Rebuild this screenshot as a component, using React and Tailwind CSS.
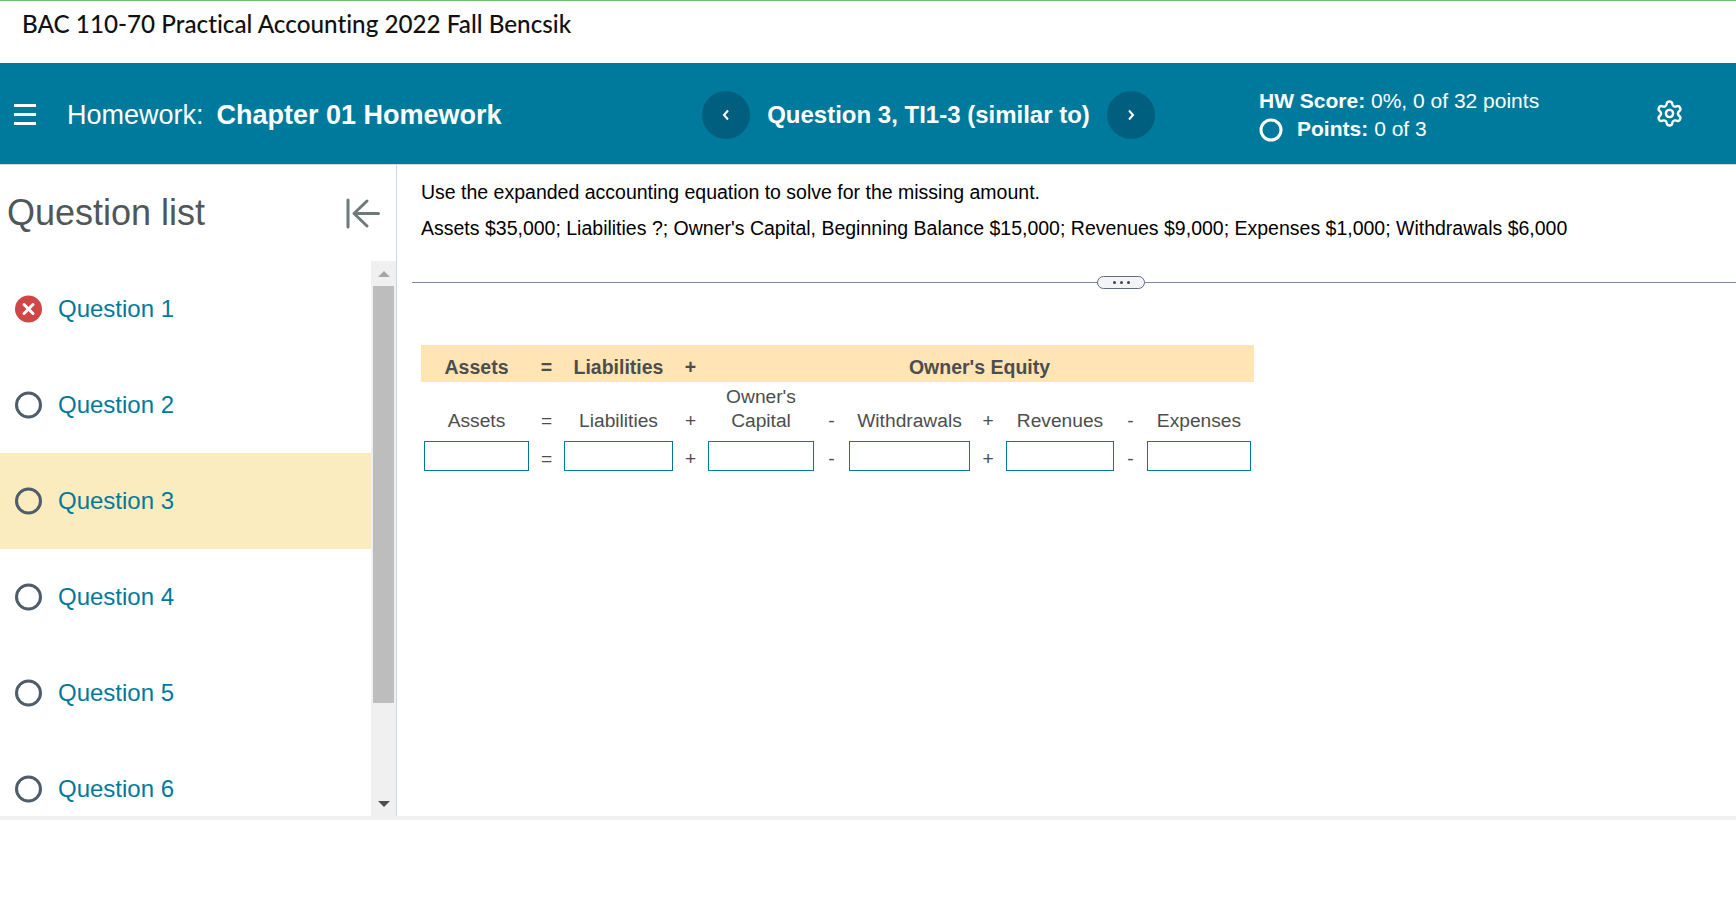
import React from 'react';
import { Settings } from 'lucide-react';

const questions = ['Question 1', 'Question 2', 'Question 3', 'Question 4', 'Question 5', 'Question 6'];

const RingIcon = () => (
  <svg width="29" height="29" viewBox="0 0 29 29" className="shrink-0">
    <circle cx="14.5" cy="14" r="12" fill="none" stroke="#4f5d6b" strokeWidth="3" />
  </svg>
);

const WrongIcon = () => (
  <svg width="29" height="29" viewBox="0 0 29 29" className="shrink-0">
    <circle cx="14.5" cy="14" r="13.5" fill="#d04545" />
    <path d="M10 9.5l9 9M19 9.5l-9 9" stroke="#fff" strokeWidth="3" strokeLinecap="round" />
  </svg>
);

const NavButton = ({ dir }) => (
  <div className="w-[48px] h-[48px] rounded-full bg-[#005f7f] flex items-center justify-center shrink-0">
    <svg width="10" height="14" viewBox="0 0 10 14" fill="none" stroke="#fff" strokeWidth="2">
      <path d={dir === 'left' ? 'M7 2.5L3 7l4 4.5' : 'M3 2.5L7 7l-4 4.5'} />
    </svg>
  </div>
);

// column widths of the equation table, operators sit between the value columns
const gridCols = 'grid grid-cols-[111px_29px_115px_29px_112px_29px_127px_30px_114px_27px_110px]';

const headLabels = ['Assets', '=', 'Liabilities', '+', "Owner's|Capital", '-', 'Withdrawals', '+', 'Revenues', '-', 'Expenses'];

const EquationTable = () => (
  <div className="w-[833px] mt-[62px] ml-[9px] text-[19.2px] leading-[24px] text-[#4d4d4d]">
    <div className={`${gridCols} h-[37px] bg-[#ffe4b5] text-[19.5px] font-bold items-center text-center pt-[6px]`}>
      <div>Assets</div>
      <div>=</div>
      <div>Liabilities</div>
      <div>+</div>
      <div className="col-span-7">Owner's Equity</div>
    </div>
    <div className={`${gridCols} h-[59px] items-end text-center pb-[8px]`}>
      {headLabels.map((label, i) => (
        <div key={i}>
          {label.split('|').map((line) => (
            <div key={line}>{line}</div>
          ))}
        </div>
      ))}
    </div>
    <div className={`${gridCols} h-[30px] items-center text-center`}>
      {headLabels.map((label, i) =>
        i % 2 === 0 ? (
          <div key={i} className="px-[3px]">
            <div className="h-[30px] bg-white border border-[#007a9c]" />
          </div>
        ) : (
          <div key={i} className="pt-[5px]">{label}</div>
        )
      )}
    </div>
  </div>
);

export default function App() {
  return (
    <div className="w-[1736px] h-[912px] overflow-hidden bg-white flex flex-col font-['Liberation_Sans',sans-serif]">
      <div className="h-[63px] border-t border-[#6cc070] pl-[22px] pt-[7px] shrink-0">
        <div className="text-[24.25px] leading-[32px] text-[#111] font-['Lato',sans-serif] font-medium [font-variant-ligatures:none]">BAC 110-70 Practical Accounting 2022 Fall Bencsik</div>
      </div>

      <div className="h-[102px] bg-[#007a9c] border-b border-[#d5dbe0] flex items-center pt-[3px] text-white shrink-0">
        <div className="w-[22px] ml-[14px] mt-[-2px] flex flex-col gap-[6px]">
          <div className="h-[3px] bg-white" />
          <div className="h-[3px] bg-white" />
          <div className="h-[3px] bg-white" />
        </div>
        <div className="ml-[31px] w-[635px] text-[27px]">
          Homework:<span className="ml-[13px] font-bold">Chapter 01 Homework</span>
        </div>
        <NavButton dir="left" />
        <div className="w-[357px] text-center text-[24px] font-bold">Question 3, TI1-3 (similar to)</div>
        <NavButton dir="right" />
        <div className="ml-[104px] w-[396px] text-[21px] leading-[28px]">
          <div><span className="font-bold">HW Score:</span> 0%, 0 of 32 points</div>
          <div className="flex items-center">
            <svg width="24" height="24" viewBox="0 0 24 24" className="mt-[2px] shrink-0">
              <circle cx="12" cy="12" r="10" fill="none" stroke="#fff" strokeWidth="3" />
            </svg>
            <span className="ml-[14px] font-bold">Points:</span>
            <span className="ml-[6px]">0 of 3</span>
          </div>
        </div>
        <Settings size={29} strokeWidth={2} className="mt-[-4px]" />
      </div>

      <div className="h-[651px] flex shrink-0">
        <div className="w-[397px] shrink-0 border-r border-[#ccd3e3] flex flex-col overflow-hidden">
          <div className="h-[96px] shrink-0 flex items-center justify-between pl-[7px] pr-[16px]">
            <div className="text-[36px] text-[#505759]">Question list</div>
            <svg width="34" height="31" viewBox="0 0 34 31" fill="none" stroke="#6f7b7b" strokeWidth="3" strokeLinecap="round" strokeLinejoin="round">
              <path d="M2 2v27M32.5 15.5H8M21 3L8 15.5 21 28" />
            </svg>
          </div>
          <div className="flex flex-1 min-h-0">
            <div className="flex-1 min-w-0">
              {questions.map((q, i) => (
                <div key={q} className={`h-[96px] flex items-center pl-[14px] gap-[15px] text-[24px] text-[#007a9c] ${i === 2 ? 'bg-[#faecbe]' : ''}`}>
                  {i === 0 ? <WrongIcon /> : <RingIcon />}
                  <span>{q}</span>
                </div>
              ))}
            </div>
            <div className="w-[25px] shrink-0 bg-[#f0f0f0] flex flex-col items-center">
              <div className="h-[25px] flex items-center justify-center">
                <div className="w-0 h-0 border-x-[6px] border-x-transparent border-b-[6px] border-b-[#a6a6a6]" />
              </div>
              <div className="w-[21px] h-[417px] bg-[#bdbdbd]" />
              <div className="flex-1 flex items-end pb-[9px]">
                <div className="w-0 h-0 border-x-[6px] border-x-transparent border-t-[6px] border-t-[#4d4d4d]" />
              </div>
            </div>
          </div>
        </div>

        <div className="flex-1 min-w-0 pl-[15px] overflow-hidden">
          <div className="pl-[9px] pt-[15px] text-[19.5px] leading-[24px] text-black">
            <div>Use the expanded accounting equation to solve for the missing amount.</div>
            <div className="mt-[12px]">Assets $35,000; Liabilities ?; Owner's Capital, Beginning Balance $15,000; Revenues $9,000; Expenses $1,000; Withdrawals $6,000</div>
          </div>
          <div className="relative mt-[42px] h-px bg-[#7d899b]">
            <div className="absolute left-[685px] top-[-6px] w-[48px] h-[13px] rounded-full bg-[#f2f4f7] border border-[#5f6f80] flex items-center justify-center gap-[4px]">
              <div className="w-[3px] h-[3px] rounded-full bg-[#444]" />
              <div className="w-[3px] h-[3px] rounded-full bg-[#444]" />
              <div className="w-[3px] h-[3px] rounded-full bg-[#444]" />
            </div>
          </div>
          <EquationTable />
        </div>
      </div>

      <div className="h-[4px] bg-[#f0f0f0] shrink-0" />
    </div>
  );
}
